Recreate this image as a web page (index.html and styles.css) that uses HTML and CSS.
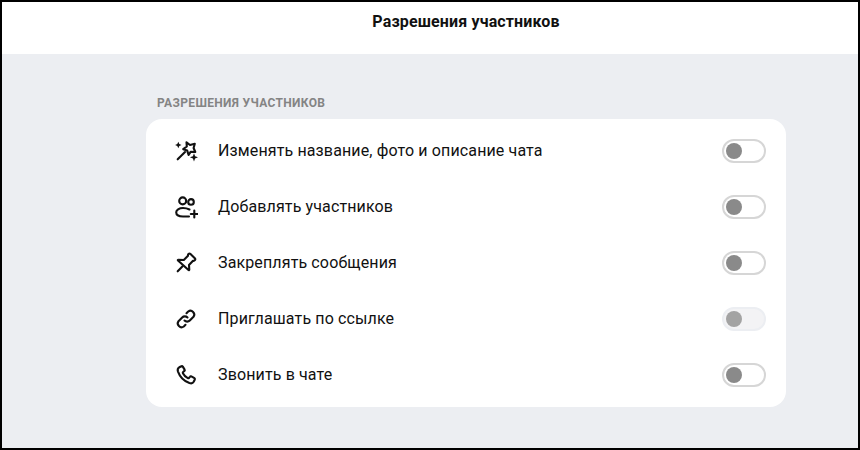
FILE: index.html
```html
<!DOCTYPE html>
<html lang="ru">
<head>
<meta charset="utf-8">
<title>Разрешения участников</title>
<link rel="stylesheet" href="styles.css">
</head>
<body>
<div class="frame">
  <header class="topbar"><h1 class="title">Разрешения участников</h1></header>
  <main class="content">
    <section class="section">
      <h2 class="section-label">Разрешения участников</h2>
      <div class="card">
        <div class="row">
          <svg class="icon" viewBox="0 0 24 24" fill="none" stroke="#111" stroke-width="2.100" stroke-linecap="round" stroke-linejoin="round"><path d="M3.700 20.300 11 13"/><path d="M12.500 3.400 16 6 20.800 4.800 19.600 9 21.300 13 16.800 12.700 14.600 15.800 13.200 11.600 9.200 10.200 12.800 7.500z"/><path fill="#111" stroke="none" d="M4.300 2.800l1 2.200 2.200 1-2.200 1-1 2.200-1-2.200L1.100 6l2.200-1zM20 14.200l1.100 3 3 1.100-3 1.100-1.100 3-1.100-3-3-1.100 3-1.100z"/></svg>
          <span class="label">Изменять название, фото и описание чата</span>
          <span class="toggle"><span class="knob"></span></span>
        </div>
        <div class="row">
          <svg class="icon" viewBox="0 0 24 24" fill="none" stroke="#111" stroke-width="2.100" stroke-linecap="round" stroke-linejoin="round"><circle cx="8.700" cy="5.900" r="3.500"/><circle cx="17" cy="6.900" r="2.800"/><path d="M15.500 14.500C13.500 13.500 11.300 13 9 13 5 13 2.200 15 2.200 17.300 2.200 20 5 21.500 9 21.500H15"/><path d="M20.300 15.500v7M16.800 19h7"/></svg>
          <span class="label">Добавлять участников</span>
          <span class="toggle"><span class="knob"></span></span>
        </div>
        <div class="row">
          <svg class="icon" viewBox="0 0 24 24" fill="none" stroke="#111" stroke-width="2.100" stroke-linecap="round" stroke-linejoin="round"><path d="M3.700 20.300 8.600 15.300"/><path d="M4.300 8.800 9.800 9 14 4.800C13.700 3.300 15.200 1.800 16.500 3L20.800 7.300C22 8.600 20.500 10.200 19 9.800L15 14 15.300 18.800c0 .4-.5.600-.8.300L4 9.500c-.3-.3-.1-.7.300-.7z"/></svg>
          <span class="label">Закреплять сообщения</span>
          <span class="toggle"><span class="knob"></span></span>
        </div>
        <div class="row">
          <svg class="icon" viewBox="0 0 24 24" fill="none" stroke="#111" stroke-width="2.100" stroke-linecap="round" stroke-linejoin="round"><path d="M10.500 13.500a3.700 3.700 0 0 0 5.300 0l3.700-3.700a3.800 3.800 0 0 0-5.300-5.300l-1.700 1.700"/><path d="M13.500 10.500a3.700 3.700 0 0 0-5.300 0l-3.700 3.700a3.800 3.800 0 0 0 5.300 5.300l1.700-1.700"/></svg>
          <span class="label">Приглашать по ссылке</span>
          <span class="toggle toggle-disabled"><span class="knob"></span></span>
        </div>
        <div class="row">
          <svg class="icon" viewBox="0 0 24 24" fill="none" stroke="#111" stroke-width="2.100" stroke-linecap="round" stroke-linejoin="round"><path d="M7.500 3.200 5.200 4.300C3.800 5.100 3.400 6.800 4 8.600c1.900 5.300 6.100 9.500 11.400 11.400 1.800.6 3.500.2 4.300-1.200l1.100-2.300c.2-.5 0-1-.4-1.300l-3-1.800c-.4-.3-1-.2-1.300.2l-1.100 1.300c-.3.300-.8.400-1.200.2-2.100-1.100-3.800-2.800-4.900-4.900-.2-.4-.1-.9.200-1.200l1.300-1.100c.4-.3.500-.9.200-1.300L8.800 3.600c-.3-.4-.8-.6-1.300-.4z"/></svg>
          <span class="label">Звонить в чате</span>
          <span class="toggle"><span class="knob"></span></span>
        </div>
      </div>
    </section>
  </main>
</div>
</body>
</html>
```

FILE: styles.css
```css
* { box-sizing: border-box; }

html, body {
  margin: 0;
  height: 100%;
}

body {
  font-family: Roboto, "Liberation Sans", sans-serif;
  background: #000;
}

.frame {
  width: 860px;
  height: 450px;
  border: 2px solid #000;
  background: #eceef2;
  display: flex;
  flex-direction: column;
  overflow: hidden;
}

.topbar {
  height: 52px;
  background: #fff;
  display: flex;
  justify-content: center;
  padding: 12px 0 0 72px;
  flex-shrink: 0;
}

.title {
  margin: 0;
  font-size: 16px;
  line-height: 16px;
  font-weight: 700;
  letter-spacing: 0.14px;
  color: #111;
}

.content {
  flex: 1;
  display: flex;
  justify-content: center;
  padding: 42px 0 0 72px;
}

.section {
  width: 640px;
}

.section-label {
  margin: 0 0 9px 11px;
  font-size: 12px;
  line-height: 14px;
  font-weight: 700;
  letter-spacing: 0.33px;
  color: #848484;
  text-transform: uppercase;
}

.card {
  background: #fff;
  border-radius: 16px;
  padding: 4px 20px 4px 28px;
}

.row {
  height: 56px;
  display: flex;
  align-items: center;
}

.icon {
  width: 24px;
  height: 24px;
  flex-shrink: 0;
}

.label {
  flex: 1;
  margin-left: 20px;
  font-size: 16px;
  line-height: 20px;
  letter-spacing: 0.13px;
  color: #111;
}

.toggle {
  width: 44px;
  height: 24px;
  border: 2px solid #d6d6d6;
  border-radius: 12px;
  background: #fff;
  display: flex;
  align-items: center;
  padding-left: 2px;
  flex-shrink: 0;
}

.knob {
  width: 16px;
  height: 16px;
  border-radius: 50%;
  background: #8a8a8a;
}

.toggle-disabled {
  background: #f3f3f5;
  border-color: #eceef2;
}

.toggle-disabled .knob {
  background: #a3a3a3;
}
```
